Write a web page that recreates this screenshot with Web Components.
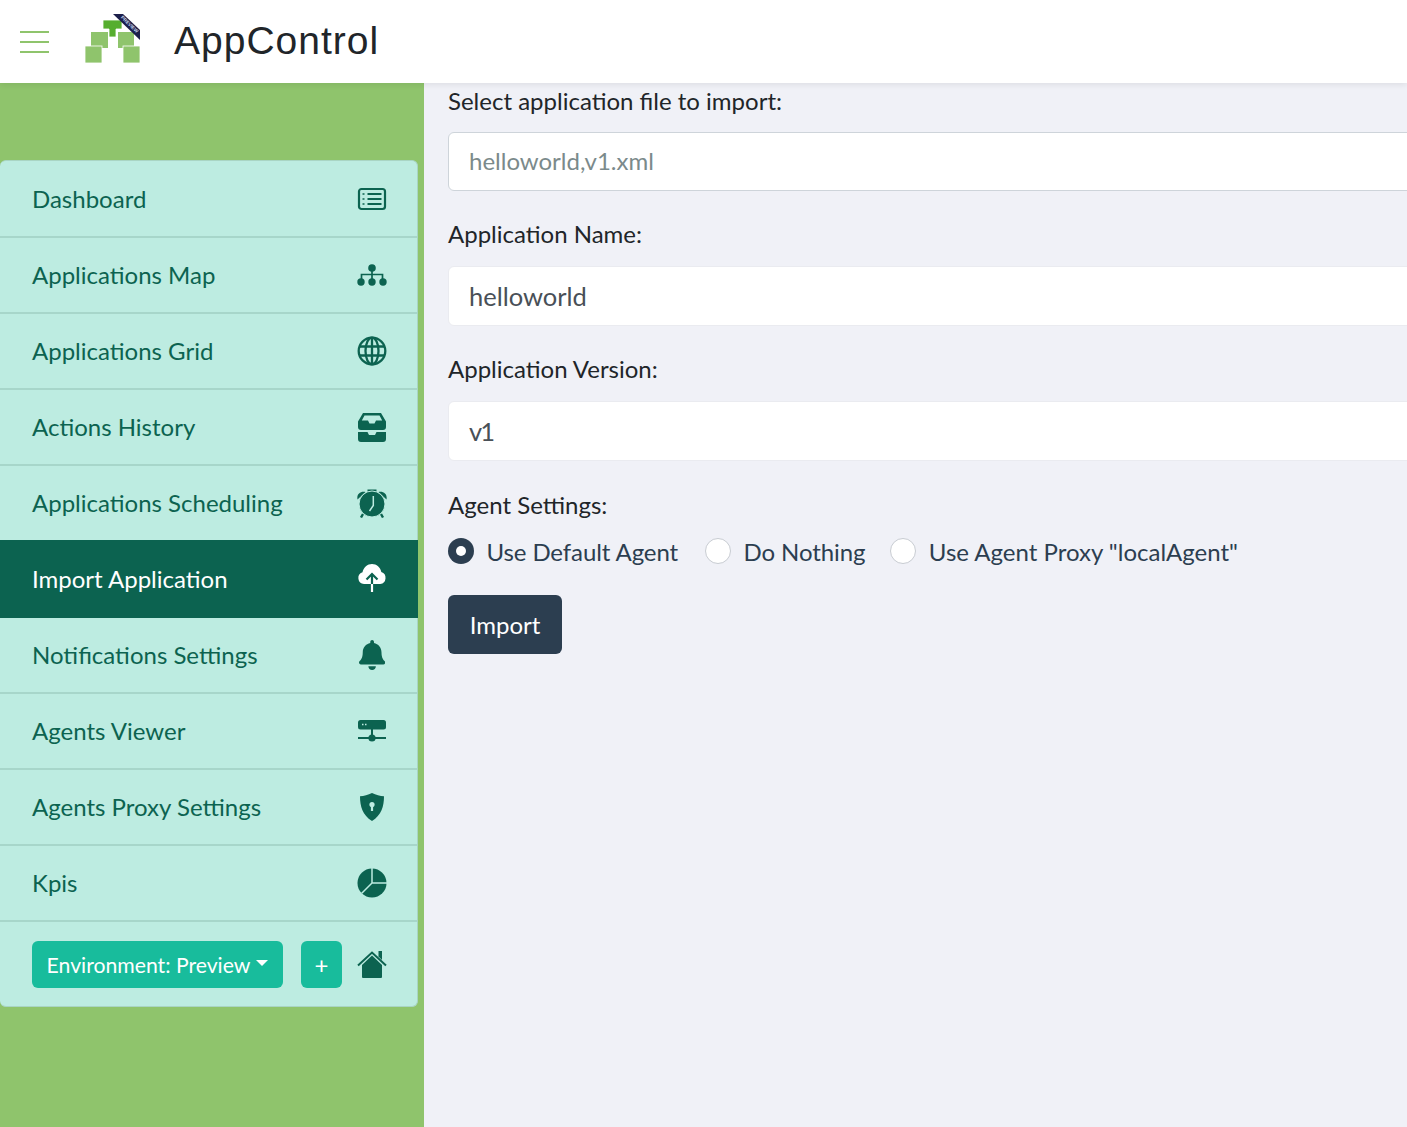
<!DOCTYPE html>
<html>
<head>
<meta charset="utf-8">
<title>AppControl</title>
<style>
  html, body { margin: 0; height: 100%; overflow: hidden; }
  body { font-family: Lato, "Liberation Sans", sans-serif; font-size: 24px; background: #f0f1f7; color: #212529; }
</style>
</head>
<body>
<app-shell>
  <app-header slot="header"></app-header>
  <side-bar slot="side">
    <nav-item label="Dashboard"><svg viewBox="0 0 30 30" fill="none" stroke="currentColor" stroke-width="2.2"><rect x="2" y="5" width="26" height="20" rx="2.5"/><path d="M10.5 10h14M10.5 15h14M10.5 20h14" /><path d="M5.5 10h2M5.5 15h2M5.5 20h2" stroke-width="1.6"/></svg></nav-item>
    <nav-item label="Applications Map"><svg viewBox="0 0 30 30" fill="currentColor"><circle cx="15" cy="8" r="3.8"/><circle cx="4" cy="22" r="3.700"/><circle cx="15" cy="22" r="3.700"/><circle cx="26" cy="22" r="3.700"/><path d="M15 10v10M4.500 19v-4.500h21V19" fill="none" stroke="currentColor" stroke-width="1.700"/></svg></nav-item>
    <nav-item label="Applications Grid"><svg viewBox="0 0 30 30" fill="none" stroke="currentColor" stroke-width="2.300"><circle cx="15" cy="15" r="13.300"/><ellipse cx="15" cy="15" rx="6.500" ry="13.300"/><path d="M15 2v26M2 10.500h26M2 19.500h26"/></svg></nav-item>
    <nav-item label="Actions History"><svg viewBox="0 0 30 30" fill="currentColor"><path fill-rule="evenodd" d="M6 1h18l5 8.500V15a3 3 0 0 1-3 3H4a3 3 0 0 1-3-3V9.500zM7.500 3.500 4.800 8.500H11l1.500 3h5l1.500-3h6.200l-2.700-5z"/><path d="M1 20h9.500l1.500 3h6l1.500-3H29v7a3 3 0 0 1-3 3H4a3 3 0 0 1-3-3z"/></svg></nav-item>
    <nav-item label="Applications Scheduling"><svg viewBox="0 0 30 30" fill="currentColor"><path d="M.5 11.500C-.5 6.500 3 3 8.500 4zM29.500 11.500C30.500 6.500 27 3 21.500 4zM10.500 1.500h9V4h-9z"/><path d="M6 26 4 29.500M24 26l2 3.500" stroke="currentColor" stroke-width="2.400"/><circle cx="15" cy="16" r="13" stroke="#bdece1"/><path d="M16.300 8v9.500L12.500 23" fill="none" stroke="#bdece1" stroke-width="1.500"/></svg></nav-item>
    <nav-item label="Import Application" active><svg viewBox="0 0 30 30" fill="currentColor"><path d="M7 21a6 6 0 0 1-1.500-11.700C6.500 4.500 10.500 1 15 1c4.600 0 8.500 3.300 9.300 8a6.200 6.200 0 0 1-1 12z"/><path d="M15 21.500V11M9.500 16.500 15 11l5.500 5.500" fill="none" stroke="#0c6350" stroke-width="2.200"/><path d="M15 21v8" stroke="currentColor" stroke-width="2.200"/></svg></nav-item>
    <nav-item label="Notifications Settings"><svg viewBox="0 0 448 512" fill="currentColor"><path d="M224 512c35.320 0 63.970-28.650 63.970-64H160.030c0 35.350 28.650 64 63.970 64zm215.390-149.710c-19.320-20.760-55.470-51.990-55.470-154.290 0-77.700-54.480-139.900-127.940-155.160V32c0-17.670-14.320-32-31.980-32s-31.980 14.330-31.980 32v20.840C118.560 68.100 64.080 130.300 64.080 208c0 102.300-36.150 133.530-55.470 154.290-6 6.450-8.660 14.160-8.610 21.710.11 16.400 12.980 32 32.100 32h383.800c19.120 0 32-15.600 32.100-32 .05-7.550-2.610-15.270-8.610-21.710z"/></svg></nav-item>
    <nav-item label="Agents Viewer"><svg viewBox="0 0 30 30" fill="currentColor"><rect x="1" y="4" width="28" height="9.500" rx="2.500"/><path d="M15 13v9M1 22h28" fill="none" stroke="currentColor" stroke-width="2"/><circle cx="15" cy="22" r="3.600"/><path d="M5 8.500h1.500M8 8.500h1.500" stroke="#bdece1" stroke-width="1.500"/></svg></nav-item>
    <nav-item label="Agents Proxy Settings"><svg viewBox="0 0 30 30" fill="currentColor"><path d="M15 1c4 2 8 3 12 3.300 0 10-2.500 19-12 24.700C5.500 23.300 3 14.300 3 4.300 7 4 11 3 15 1z"/><circle cx="15" cy="12.500" r="2.600" fill="#bdece1"/><path d="M15 13v6" stroke="#bdece1" stroke-width="2.200"/></svg></nav-item>
    <nav-item label="Kpis"><svg viewBox="0 0 30 30" fill="currentColor"><circle cx="15" cy="15" r="14.500"/><path d="M15 0v15L4.500 25.500M15 15h15" fill="none" stroke="#bdece1" stroke-width="1.500"/></svg></nav-item>
    <env-bar></env-bar>
  </side-bar>
  <import-form slot="main"></import-form>
</app-shell>

<script>
class AppShell extends HTMLElement {
  connectedCallback() {
    this.attachShadow({ mode: 'open' });
    this.shadowRoot.innerHTML = `
      <style>
        :host { display: grid; grid-template-columns: 424px 1fr; grid-template-rows: 83px 1fr; height: 1127px; width: 1407px; overflow: hidden; }
        .top { grid-column: 1 / 3; z-index: 2; }
        .main { min-width: 0; overflow: hidden; }
      </style>
      <div class="top"><slot name="header"></slot></div>
      <slot name="side"></slot>
      <div class="main"><slot name="main"></slot></div>
    `;
  }
}
customElements.define('app-shell', AppShell);

class AppHeader extends HTMLElement {
  connectedCallback() {
    this.attachShadow({ mode: 'open' });
    this.shadowRoot.innerHTML = `
      <style>
        :host { display: flex; align-items: center; height: 83px; background: #fff; box-shadow: 0 2px 6px rgba(0,0,0,.08); }
        .burger { width: 29px; margin-left: 20px; display: flex; flex-direction: column; gap: 8px; }
        .burger i { display: block; height: 2px; background: #8fc46c; }
        .logo { margin-left: 36px; width: 56px; height: 50px; flex: none; align-self: flex-start; margin-top: 14px; overflow: visible; }
        .name { margin-left: 33px; font: 39px "Liberation Sans", Arial, sans-serif; letter-spacing: 1px; color: #212529; position: relative; top: -1px; }
      </style>
      <div class="burger"><i></i><i></i><i></i></div>
      <svg class="logo" viewBox="0 0 56 50">
        <rect x="6" y="18" width="17" height="16" fill="#8fc46c"/>
        <rect x="33" y="18" width="16" height="16" fill="#8fc46c"/>
        <rect x="0" y="32" width="17" height="17" fill="#8fc46c" stroke="#fff" stroke-width=".8"/>
        <rect x="38" y="32" width="17" height="17" fill="#8fc46c" stroke="#fff" stroke-width=".8"/>
        <path d="M18 6h19v9h-6v8h-7v-8h-6z" fill="#56ae2e" stroke="#fff" stroke-width=".8"/>
        <path d="M28 0h10l17 16v10z" fill="#1c1f4a"/>
        <text transform="translate(35.500 3.800) rotate(44)" font-family="Liberation Sans, sans-serif" font-size="4.800" font-weight="700" fill="#c7d6ee">PREVIEW</text>
      </svg>
      <div class="name">AppControl</div>
    `;
  }
}
customElements.define('app-header', AppHeader);

class SideBar extends HTMLElement {
  connectedCallback() {
    this.attachShadow({ mode: 'open' });
    this.shadowRoot.innerHTML = `
      <style>
        :host { display: block; background: #8fc46c; padding: 77px 6px 0 0; }
        .card { background: #bdece1; border: 1px solid #a9d5c4; border-left: 0; border-radius: 6px; padding-top: 1px; display: flex; flex-direction: column; }
      </style>
      <div class="card"><slot></slot></div>
    `;
  }
}
customElements.define('side-bar', SideBar);

class NavItem extends HTMLElement {
  connectedCallback() {
    this.attachShadow({ mode: 'open' });
    this.shadowRoot.innerHTML = `
      <style>
        :host { display: flex; align-items: center; justify-content: space-between; box-sizing: border-box; height: 76px; padding: 0 30px 2px 32px; border-bottom: 2px solid #a7d6ca; color: #0c6350; font-size: 24px; }
        :host([active]) { background: #0c6350; color: #fff; height: 78px; margin: -2px -1px 0 0; padding: 0 31px 2px 32px; border-bottom: 0; z-index: 1; }
        .icon { width: 30px; height: 30px; flex: none; display: flex; justify-content: center; margin-top: 2px; }
        :host([active]) .icon { margin-top: 0; }
        ::slotted(svg) { height: 30px; width: auto; display: block; }
      </style>
      <span class="text"></span>
      <span class="icon"><slot></slot></span>
    `;
    this.shadowRoot.querySelector('.text').textContent = this.getAttribute('label');
  }
}
customElements.define('nav-item', NavItem);

class EnvBar extends HTMLElement {
  connectedCallback() {
    this.attachShadow({ mode: 'open' });
    this.shadowRoot.innerHTML = `
      <style>
        :host { display: flex; align-items: center; height: 84px; padding: 1px 30px 0 32px; color: #0c6350; box-sizing: border-box; }
        .btn { background: #18bc9c; color: #fff; border-radius: 6px; height: 47px; display: flex; align-items: center; justify-content: center; font-size: 21.200px; box-sizing: border-box; }
        .env { width: 251px; gap: 6px; }
        .caret { width: 0; height: 0; border: 6px solid transparent; border-top-color: #fff; border-bottom: 0; margin-top: -3px; }
        .plus { width: 41px; margin-left: 18px; font-size: 24px; }
        svg { width: 30px; height: 30px; margin-left: auto; margin-top: -2px; }
      </style>
      <div class="btn env">Environment: Preview<i class="caret"></i></div>
      <div class="btn plus">+</div>
      <svg viewBox="0 0 30 30" fill="currentColor">
        <path d="M5 16 15 6.500 25 16v12a1 1 0 0 1-1 1H6a1 1 0 0 1-1-1z"/>
        <path d="M1 16.500 15 3.500l14 13" fill="none" stroke="currentColor" stroke-width="2"/>
        <path d="M21.500 2h3.500v9l-3.500-3.500z"/>
      </svg>
    `;
  }
}
customElements.define('env-bar', EnvBar);

class FormField extends HTMLElement {
  connectedCallback() {
    this.attachShadow({ mode: 'open' });
    const tone = this.hasAttribute('disabled') ? 'disabled' : '';
    this.shadowRoot.innerHTML = `
      <style>
        :host { display: block; margin-bottom: 25px; }
        .label { line-height: 36px; margin-bottom: 14px; }
        :host([disabled]) .label { margin-bottom: 13px; }
        .box { box-sizing: border-box; height: 60px; width: 1400px; background: #fff; border: 1.500px solid #eaebf0; border-radius: 6px; padding-left: 20px; display: flex; align-items: center; color: #495057; font-size: 25.500px; letter-spacing: var(--value-spacing, normal); }
        .box.disabled { border-color: #ced4da; color: #7b8a8b; font-size: 24px; height: 59px; padding-bottom: 2px; }
      </style>
      <div class="label"></div>
      <div class="box ${tone}"></div>
    `;
    this.shadowRoot.querySelector('.label').textContent = this.getAttribute('label');
    this.shadowRoot.querySelector('.box').textContent = this.getAttribute('value');
  }
}
customElements.define('form-field', FormField);

class RadioOption extends HTMLElement {
  connectedCallback() {
    this.attachShadow({ mode: 'open' });
    this.shadowRoot.innerHTML = `
      <style>
        :host { display: inline-flex; align-items: center; gap: 12.500px; color: #2c3e50; }
        .dot { box-sizing: border-box; width: 26px; height: 26px; border-radius: 50%; background: #fff; border: 1px solid #c8ccd2; margin-top: -2px; }
        .text { margin-top: -2px; }
        :host([checked]) .dot { background: #2c3e50; border: 0; display: flex; align-items: center; justify-content: center; }
        :host([checked]) .dot::after { content: ""; width: 10px; height: 10px; border-radius: 50%; background: #fff; }
      </style>
      <span class="dot"></span><span class="text"><slot></slot></span>
    `;
  }
}
customElements.define('radio-option', RadioOption);

class ImportForm extends HTMLElement {
  connectedCallback() {
    this.attachShadow({ mode: 'open' });
    this.shadowRoot.innerHTML = `
      <style>
        :host { display: block; padding: 0 0 0 24px; }
        .label { line-height: 36px; padding-top: 1px; margin-bottom: 11px; }
        .radios { display: flex; gap: 27px; height: 36px; align-items: center; }
        .tight { letter-spacing: -.1px; }
        button { all: unset; display: block; box-sizing: border-box; margin-top: 25px; width: 114px; height: 59px; background: #2c3e50; color: #fff; border-radius: 6px; text-align: center; line-height: 59px; font: inherit; }
      </style>
      <form-field label="Select application file to import:" value="helloworld,v1.xml" disabled></form-field>
      <form-field label="Application Name:" value="helloworld"></form-field>
      <form-field label="Application Version:" value="v1" style="--value-spacing:-2px"></form-field>
      <div class="label">Agent Settings:</div>
      <div class="radios">
        <radio-option class="tight" checked>Use Default Agent</radio-option>
        <radio-option class="tight" style="margin-right:-2px">Do Nothing</radio-option>
        <radio-option>Use Agent Proxy "localAgent"</radio-option>
      </div>
      <button type="button">Import</button>
    `;
  }
}
customElements.define('import-form', ImportForm);
</script>
</body>
</html>
